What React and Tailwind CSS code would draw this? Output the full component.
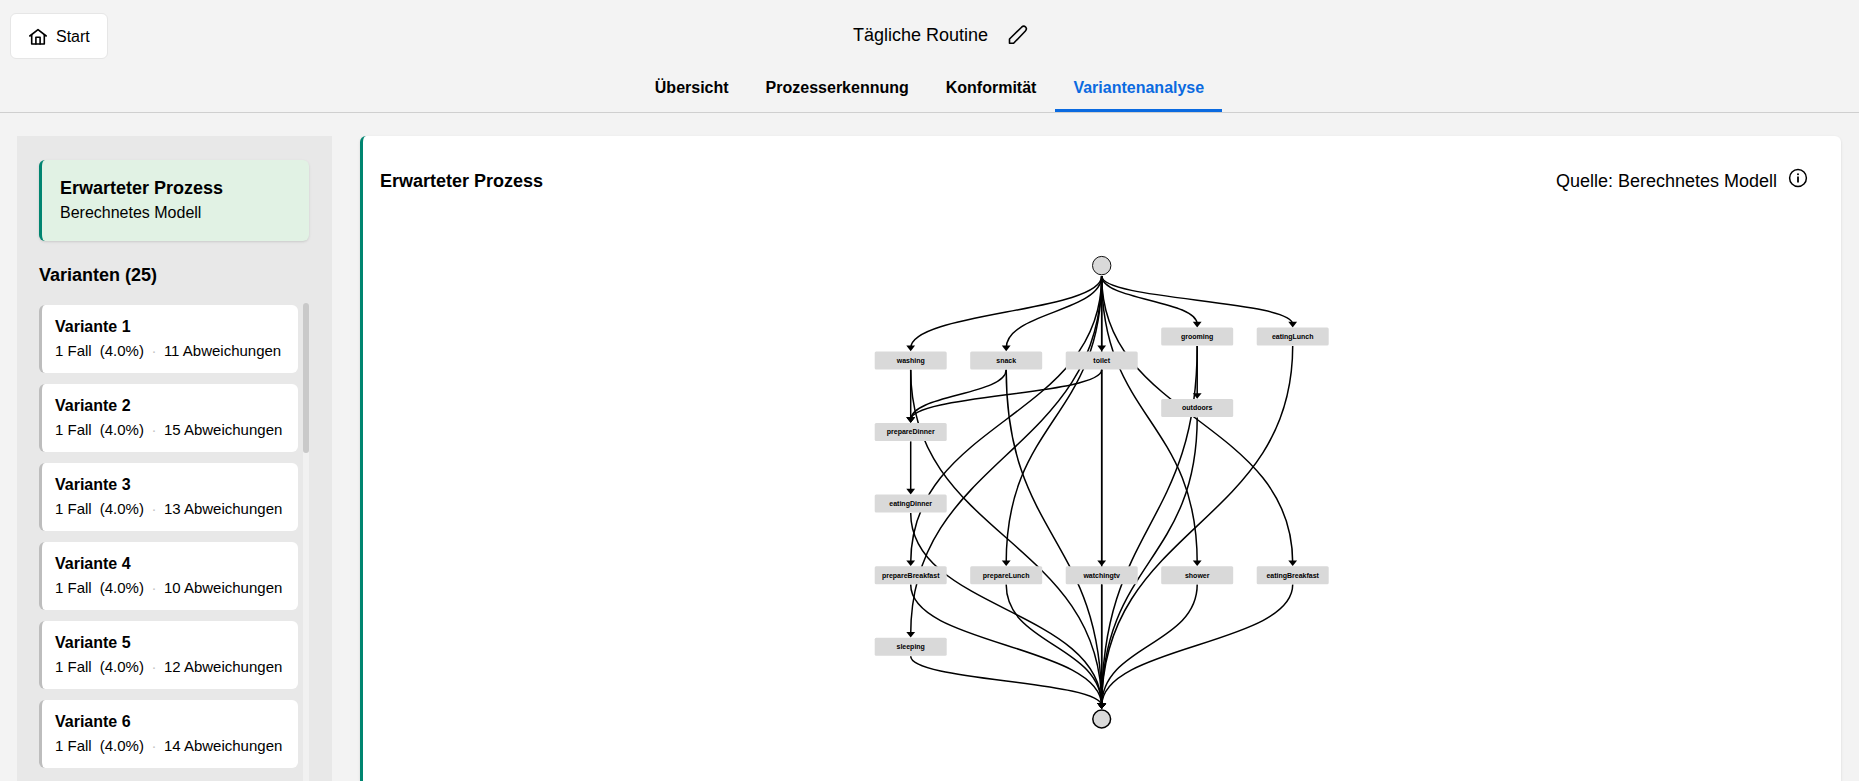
import React, { useState } from 'react';

const tabs = ['Übersicht', 'Prozesserkennung', 'Konformität', 'Variantenanalyse'];

const variants = [
  { id: 1, cases: 1, share: '4.0%', deviations: 11 },
  { id: 2, cases: 1, share: '4.0%', deviations: 15 },
  { id: 3, cases: 1, share: '4.0%', deviations: 13 },
  { id: 4, cases: 1, share: '4.0%', deviations: 10 },
  { id: 5, cases: 1, share: '4.0%', deviations: 12 },
  { id: 6, cases: 1, share: '4.0%', deviations: 14 },
];

const NODE_W = 72;
const NODE_H = 18;

const nodes = {
  washing: { x: 38.7, y: 110.4 },
  snack: { x: 134.2, y: 110.4 },
  toilet: { x: 229.7, y: 110.4 },
  grooming: { x: 325.2, y: 86.6 },
  eatingLunch: { x: 420.7, y: 86.6 },
  outdoors: { x: 325.2, y: 158 },
  prepareDinner: { x: 38.7, y: 182 },
  eatingDinner: { x: 38.7, y: 253.6 },
  prepareBreakfast: { x: 38.7, y: 325.2 },
  prepareLunch: { x: 134.2, y: 325.2 },
  watchingtv: { x: 229.7, y: 325.2 },
  shower: { x: 325.2, y: 325.2 },
  eatingBreakfast: { x: 420.7, y: 325.2 },
  sleeping: { x: 38.7, y: 396.8 },
};

const start = { x: 229.7, y: 15.6 };
const end = { x: 229.7, y: 469 };

const edges = [
  ['start', 'washing'],
  ['start', 'snack'],
  ['start', 'toilet'],
  ['start', 'grooming'],
  ['start', 'eatingLunch'],
  ['start', 'prepareBreakfast'],
  ['start', 'prepareLunch'],
  ['start', 'sleeping'],
  ['start', 'watchingtv'],
  ['start', 'shower'],
  ['start', 'eatingBreakfast'],
  ['washing', 'prepareDinner'],
  ['snack', 'prepareDinner'],
  ['toilet', 'prepareDinner'],
  ['toilet', 'end'],
  ['grooming', 'outdoors'],
  ['prepareDinner', 'eatingDinner'],
  ['washing', 'end'],
  ['snack', 'end'],
  ['grooming', 'end'],
  ['outdoors', 'end'],
  ['eatingLunch', 'end'],
  ['eatingDinner', 'end'],
  ['prepareBreakfast', 'end'],
  ['prepareLunch', 'end'],
  ['watchingtv', 'end'],
  ['shower', 'end'],
  ['eatingBreakfast', 'end'],
  ['sleeping', 'end'],
];

const sourcePoint = (id) =>
  id === 'start' ? { x: start.x, y: start.y + 10.4 } : { x: nodes[id].x, y: nodes[id].y + 9.4 };

const targetPoint = (id) =>
  id === 'end' ? { x: end.x, y: end.y - 10.2 } : { x: nodes[id].x, y: nodes[id].y - 9.2 };

const Edge = ({ from, to }) => {
  const s = sourcePoint(from);
  const t = targetPoint(to);
  const lineEnd = t.y - 3;
  const mid = (s.y + lineEnd) / 2;
  return (
    <g>
      <path
        d={`M${s.x} ${s.y} C${s.x} ${mid} ${t.x} ${mid} ${t.x} ${lineEnd}`}
        fill="none"
        stroke="#000"
        strokeWidth="1.5"
      />
      <path d={`M${t.x - 4.4} ${t.y - 5.6} h8.8 L${t.x} ${t.y} Z`} fill="#000" />
    </g>
  );
};

const ProcessGraph = () => (
  <svg
    className="w-[460px] max-w-full"
    viewBox="0 0 460 480"
    role="img"
    aria-label="Erwarteter Prozess"
  >
    {edges.map(([from, to]) => (
      <Edge key={`${from}-${to}`} from={from} to={to} />
    ))}
    <circle cx={start.x} cy={start.y} r="9.2" fill="#d9d9d9" stroke="#111" strokeWidth="1" />
    <circle cx={end.x} cy={end.y} r="8.9" fill="#d9d9d9" stroke="#000" strokeWidth="1.5" />
    {Object.entries(nodes).map(([name, { x, y }]) => (
      <g key={name}>
        <rect
          x={x - NODE_W / 2}
          y={y - NODE_H / 2}
          width={NODE_W}
          height={NODE_H}
          rx="1.5"
          fill="#d9d9d9"
        />
        <text x={x} y={y + 2.4} textAnchor="middle" className="text-[7px] font-bold" fill="#000">
          {name}
        </text>
      </g>
    ))}
  </svg>
);

const HomeIcon = () => (
  <svg
    className="size-5"
    viewBox="0 0 20 20"
    fill="none"
    stroke="currentColor"
    strokeWidth="1.6"
    strokeLinejoin="round"
    strokeLinecap="round"
    aria-hidden="true"
  >
    <path d="M1.8 9 10 2.6 18.2 9" />
    <path d="M3.7 7.8V17h12.6V7.8" />
    <path d="M7.9 17V10.2h4.2V17" />
  </svg>
);

const PencilIcon = () => (
  <svg
    className="size-5"
    viewBox="0 0 20 20"
    fill="none"
    stroke="currentColor"
    strokeWidth="1.6"
    strokeLinejoin="round"
    aria-hidden="true"
  >
    <path d="M1.5 18.3V14L13.6 2.2c1.3-1.2 2.9-1.2 4 -.2 1 1.1 1 2.7-.2 4L5.6 18.3Z" />
  </svg>
);

const InfoIcon = () => (
  <svg className="size-5" viewBox="0 0 20 20" aria-hidden="true">
    <circle cx="10" cy="10" r="8.4" fill="none" stroke="currentColor" strokeWidth="1.5" />
    <circle cx="10" cy="6.3" r="1" fill="currentColor" />
    <path d="M10 8.4v6" stroke="currentColor" strokeWidth="1.8" />
  </svg>
);

const Header = ({ activeTab, onTabChange }) => (
  <header className="relative border-b border-[#cfcfcf]">
    <button className="absolute left-[10px] top-[13px] flex h-[46px] items-center gap-2 rounded-md border border-[#e6e6e6] bg-white px-[17px] pt-px text-base">
      <HomeIcon />
      Start
    </button>
    <div className="flex h-[70px] items-center justify-center gap-5 pl-[22px]">
      <h1 className="text-lg">Tägliche Routine</h1>
      <button aria-label="Namen bearbeiten">
        <PencilIcon />
      </button>
    </div>
    <nav className="flex justify-center gap-px" role="tablist">
      {tabs.map((tab) => (
        <button
          key={tab}
          role="tab"
          aria-selected={tab === activeTab}
          onClick={() => onTabChange(tab)}
          className={
            tab === activeTab
              ? 'h-[42px] border-b-[3px] border-[#0a6ae0] px-[18px] pb-1 text-base font-bold text-[#0a6ae0]'
              : 'h-[42px] border-b-[3px] border-transparent px-[18px] pb-1 text-base font-bold'
          }
        >
          {tab}
        </button>
      ))}
    </nav>
  </header>
);

const VariantCard = ({ variant }) => (
  <button className="block h-[68px] w-full rounded-md border-l-[3px] border-[#bdbdbd] bg-white px-[13px] text-left">
    <span className="block text-base leading-6 font-bold">Variante {variant.id}</span>
    <span className="flex text-[15px] leading-6 whitespace-nowrap">
      <span>{variant.cases} Fall</span>
      <span className="ml-2">({variant.share})</span>
      <span className="w-5 text-center text-[#c4c4c4]">·</span>
      <span>{variant.deviations} Abweichungen</span>
    </span>
  </button>
);

const Sidebar = () => (
  <aside className="w-[315px] shrink-0 bg-[#e8e8e8] pt-6 pr-[23px] pl-[22px]">
    <button className="block w-full rounded-md border-l-[3px] border-[#008570] bg-[#e1f2e4] px-[18px] py-4 text-left shadow">
      <span className="block text-lg leading-6 font-bold">Erwarteter Prozess</span>
      <span className="block text-base leading-[25px]">Berechnetes Modell</span>
    </button>
    <h2 className="mt-5 text-lg leading-7 font-bold">Varianten (25)</h2>
    <div className="mt-[14px] flex h-[70vh] gap-[5px] overflow-hidden">
      <div className="flex flex-1 flex-col gap-[11px] pt-[2px]">
        {variants.map((variant) => (
          <VariantCard key={variant.id} variant={variant} />
        ))}
      </div>
      <div className="w-[6px] rounded-full bg-[#f1f1f1]">
        <div className="h-[150px] rounded-full bg-[#c9c9c9]"></div>
      </div>
    </div>
  </aside>
);

const App = () => {
  const [activeTab, setActiveTab] = useState('Variantenanalyse');

  return (
    <div className="flex h-screen flex-col overflow-hidden bg-[#f3f3f3] font-['Liberation_Sans',Arial,sans-serif] text-black">
      <Header activeTab={activeTab} onTabChange={setActiveTab} />
      <div className="flex min-h-0 flex-1 gap-7 pt-[23px] pr-[18px] pl-[17px]">
        <Sidebar />
        <main className="min-w-0 flex-1 rounded-t-md border-l-[3px] border-[#008570] bg-white shadow">
          <div className="flex items-center justify-between pt-[31px] pr-[33px] pl-[17px]">
            <h2 className="text-lg font-bold">Erwarteter Prozess</h2>
            <div className="flex items-start gap-[11px] text-lg">
              <span>Quelle: Berechnetes Modell</span>
              <button aria-label="Informationen zur Quelle" className="pt-px">
                <InfoIcon />
              </button>
            </div>
          </div>
          <div className="mt-[55px] flex justify-center">
            <ProcessGraph />
          </div>
        </main>
      </div>
    </div>
  );
};

export default App;
